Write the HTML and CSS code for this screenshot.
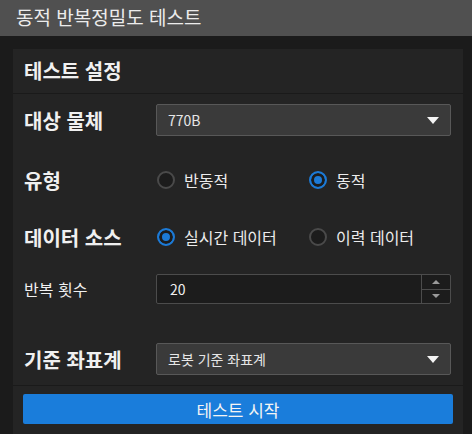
FILE: index.html
```html
<!DOCTYPE html>
<html lang="ko">
<head>
  <meta charset="UTF-8">
  <title>동적 반복정밀도 테스트</title>
  <link rel="stylesheet" href="styles.css">
</head>
<body>
<div class="titlebar">동적 반복정밀도 테스트</div>

<div class="window">
  <div class="panel">
    <div class="panel-title">테스트 설정</div>

    <div class="form">
      <div class="row row-target">
        <div class="label">대상 물체</div>
        <div class="select">
          <span>770B</span>
          <span class="caret"></span>
        </div>
      </div>

      <div class="row row-type">
        <div class="label">유형</div>
        <div class="radios">
          <label class="radio"><span class="dot"></span>반동적</label>
          <label class="radio checked"><span class="dot"></span>동적</label>
        </div>
      </div>

      <div class="row row-source">
        <div class="label">데이터 소스</div>
        <div class="radios">
          <label class="radio checked"><span class="dot"></span>실시간 데이터</label>
          <label class="radio"><span class="dot"></span>이력 데이터</label>
        </div>
      </div>

      <div class="row row-count">
        <div class="label small">반복 횟수</div>
        <div class="spinbox">
          <span class="value">20</span>
          <div class="spin-buttons">
            <span class="spin up"></span>
            <span class="spin down"></span>
          </div>
        </div>
      </div>

      <div class="row row-frame">
        <div class="label">기준 좌표계</div>
        <div class="select">
          <span>로봇 기준 좌표계</span>
          <span class="caret"></span>
        </div>
      </div>
    </div>

    <div class="footer">
      <button class="start">테스트 시작</button>
    </div>
  </div>
</div>
</body>
</html>
```

FILE: styles.css
```css
body {
  margin: 0;
  background-color: #1b1b1b;
  color: #f0f0f0;
  font-family: "Noto Sans CJK KR", "Noto Sans", sans-serif;
  height: 434px;
  overflow: hidden;
}

.titlebar {
  height: 36px;
  line-height: 33px;
  background-color: #505050;
  color: #ececec;
  font-size: 19px;
  padding-left: 16px;
}

.window {
  padding: 13px 9px 0 13px;
  border-left: 3px solid #181a1a;
  margin-left: -3px;
}

.panel {
  background-color: #242424;
  height: 400px;
}

.panel-title {
  height: 44px;
  line-height: 44px;
  padding-left: 11px;
  font-size: 20px;
  font-weight: bold;
  border-bottom: 1px solid #1a1a1a;
}

.form {
  padding: 10px 12px 0 11px;
}

.row {
  display: flex;
  align-items: center;
  min-height: 32px;
}

.row-type { margin-top: 28px; }
.row-source { margin-top: 25px; }
.row-count { margin-top: 21px; min-height: 30px; }
.row-frame { margin-top: 39px; }

.label {
  width: 132px;
  font-size: 20px;
  font-weight: bold;
  flex-shrink: 0;
}

.label.small {
  font-size: 16px;
  font-weight: normal;
}

.select {
  flex: 1;
  height: 30px;
  background-color: #3a3a3a;
  border: 1px solid #585858;
  border-radius: 2px;
  display: flex;
  align-items: center;
  justify-content: space-between;
  padding: 0 11px 0 11px;
  font-size: 14px;
  color: #e6e6e6;
}

.caret {
  width: 0;
  height: 0;
  border-left: 6px solid transparent;
  border-right: 6px solid transparent;
  border-top: 7px solid #f4f4f4;
}

.radios {
  display: flex;
  flex: 1;
}

.radio {
  width: 152px;
  display: flex;
  align-items: center;
  font-size: 16px;
  color: #ececec;
}

.dot {
  width: 14px;
  height: 14px;
  border: 2px solid #4a4a4a;
  border-radius: 50%;
  background-color: #1c1c1c;
  margin: 0 9px 0 1px;
  box-sizing: content-box;
}

.radio.checked .dot {
  border-color: #1c7ad6;
  background-color: #1c7ad6;
  box-shadow: inset 0 0 0 3px #1c1c1c;
}

.spinbox {
  flex: 1;
  height: 28px;
  background-color: #1c1c1c;
  border: 1px solid #4c4c4c;
  border-radius: 2px;
  display: flex;
  font-size: 14px;
}

.spinbox .value {
  flex: 1;
  line-height: 28px;
  padding-left: 13px;
  color: #f0f0f0;
}

.spin-buttons {
  width: 28px;
  border-left: 1px solid #4c4c4c;
  display: flex;
  flex-direction: column;
}

.spin {
  flex: 1;
  display: flex;
  align-items: center;
  justify-content: center;
}

.spin.up {
  border-bottom: 1px solid #4c4c4c;
}

.spin::after {
  content: "";
  border-left: 4px solid transparent;
  border-right: 4px solid transparent;
}

.spin.up::after { border-bottom: 4px solid #9a9a9a; }
.spin.down::after { border-top: 4px solid #9a9a9a; }

.footer {
  margin-top: 10px;
  border-top: 1px solid #1a1a1a;
  padding: 8px 10px 0 10px;
}

.start {
  display: block;
  width: 100%;
  height: 30px;
  background-color: #1a7ddb;
  color: #f4f4f4;
  border: none;
  border-radius: 2px;
  font-family: inherit;
  font-size: 17px;
  cursor: pointer;
}
```
